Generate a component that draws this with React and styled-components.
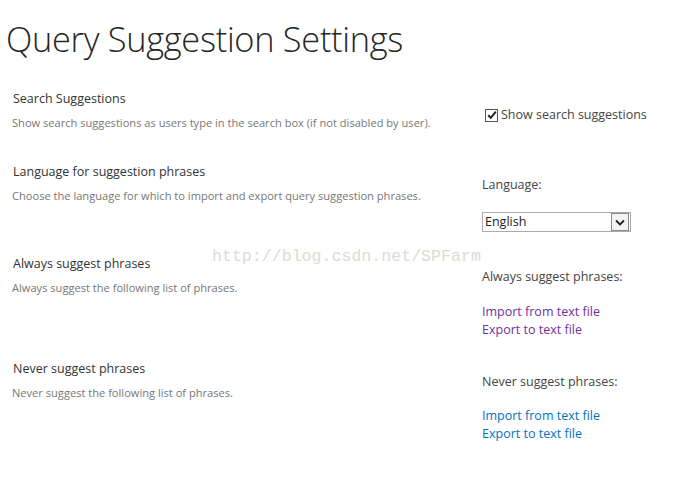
import React from "react";
import styled, { createGlobalStyle } from "styled-components";

const Global = createGlobalStyle`
  html, body { margin: 0; padding: 0; background: #fff; }
  body { font-family: "Open Sans", "Noto Sans", sans-serif; color: #444; }
`;

const Page = styled.div`
  position: relative;
  width: 674px;
  height: 493px;
  overflow: hidden;
`;

const Title = styled.h1`
  margin: 0;
  padding: 14px 0 0 6px;
  font-family: "Open Sans", sans-serif;
  font-weight: 300;
  font-size: 34.4px;
  line-height: 50px;
  color: #262626;
  letter-spacing: -0.3px;
`;

const Sections = styled.div`
  display: flex;
  flex-direction: column;
  padding-top: 26px;
`;

const Section = styled.div`
  display: grid;
  grid-template-columns: 470px 1fr;
  height: ${(p) => p.$h}px;
`;

const Left = styled.div`
  padding-left: 12px;
`;

const Label = styled.div`
  font-size: 12.5px;
  line-height: 18px;
  color: #333;
  padding-left: 1px;
`;

const Desc = styled.div`
  margin-top: 7px;
  font-size: 11.1px;
  line-height: 16px;
  color: #777;
`;

const Right = styled.div`
  padding-left: 12px;
  padding-top: ${(p) => p.$top}px;
  display: flex;
  flex-direction: column;
  align-items: flex-start;
`;

const RightText = styled.div`
  font-size: 12.5px;
  line-height: 18px;
  color: #444;
`;

const CheckRow = styled.label`
  display: flex;
  align-items: center;
  gap: 3px;
  font-size: 12.5px;
  line-height: 18px;
  color: #444;
  padding-left: 3px;
`;

const Box = styled.span`
  width: 11px;
  height: 11px;
  border: 1px solid #555;
  background: #fff;
  display: flex;
  align-items: center;
  justify-content: center;
`;

const Select = styled.div`
  margin-top: 18px;
  width: 147px;
  height: 18px;
  border: 1px solid #ababab;
  display: flex;
  align-items: center;
  font-size: 12.5px;
  color: #222;
`;

const SelectText = styled.span`
  flex: 1;
  padding-left: 2px;
  line-height: 18px;
`;

const SelectBtn = styled.span`
  width: 16px;
  height: 16px;
  margin-right: 1px;
  border: 1px solid #8a8a8a;
  background: #f3f3f3;
  display: flex;
  align-items: center;
  justify-content: center;
`;

const Links = styled.div`
  margin-top: ${(p) => p.$gap}px;
  display: flex;
  flex-direction: column;
`;

const Link = styled.a`
  font-size: 12.5px;
  line-height: 17.5px;
  color: ${(p) => (p.$visited ? "#7030a0" : "#0072c6")};
  text-decoration: none;
  cursor: pointer;
`;

const Watermark = styled.div`
  position: absolute;
  left: 212px;
  top: 247px;
  font-family: "Liberation Mono", monospace;
  font-size: 16.6px;
  line-height: 20px;
  color: #dcdcd6;
  pointer-events: none;
`;

export default function App() {
  return (
    <Page>
      <Global />
      <Title>Query Suggestion Settings</Title>
      <Sections>
        <Section $h={73}>
          <Left>
            <Label>Search Suggestions</Label>
            <Desc>Show search suggestions as users type in the search box (if not disabled by user).</Desc>
          </Left>
          <Right $top={16}>
            <CheckRow>
              <Box>
                <svg width="10" height="10" viewBox="0 0 10 10">
                  <path d="M1.2 5.2 L3.8 7.8 L8.8 1.6" fill="none" stroke="#222" strokeWidth="2" />
                </svg>
              </Box>
              Show search suggestions
            </CheckRow>
          </Right>
        </Section>
        <Section $h={92}>
          <Left>
            <Label>Language for suggestion phrases</Label>
            <Desc>Choose the language for which to import and export query suggestion phrases.</Desc>
          </Left>
          <Right $top={13}>
            <RightText>Language:</RightText>
            <Select>
              <SelectText>English</SelectText>
              <SelectBtn>
                <svg width="10" height="7" viewBox="0 0 10 7">
                  <path d="M1 1.5 L5 5.5 L9 1.5" fill="none" stroke="#222" strokeWidth="1.8" />
                </svg>
              </SelectBtn>
            </Select>
          </Right>
        </Section>
        <Section $h={105}>
          <Left>
            <Label>Always suggest phrases</Label>
            <Desc>Always suggest the following list of phrases.</Desc>
          </Left>
          <Right $top={13}>
            <RightText>Always suggest phrases:</RightText>
            <Links $gap={17}>
              <Link $visited>Import from text file</Link>
              <Link $visited>Export to text file</Link>
            </Links>
          </Right>
        </Section>
        <Section $h={100}>
          <Left>
            <Label>Never suggest phrases</Label>
            <Desc>Never suggest the following list of phrases.</Desc>
          </Left>
          <Right $top={13}>
            <RightText>Never suggest phrases:</RightText>
            <Links $gap={16}>
              <Link>Import from text file</Link>
              <Link>Export to text file</Link>
            </Links>
          </Right>
        </Section>
      </Sections>
      <Watermark>http://blog.csdn.net/SPFarm</Watermark>
    </Page>
  );
}
